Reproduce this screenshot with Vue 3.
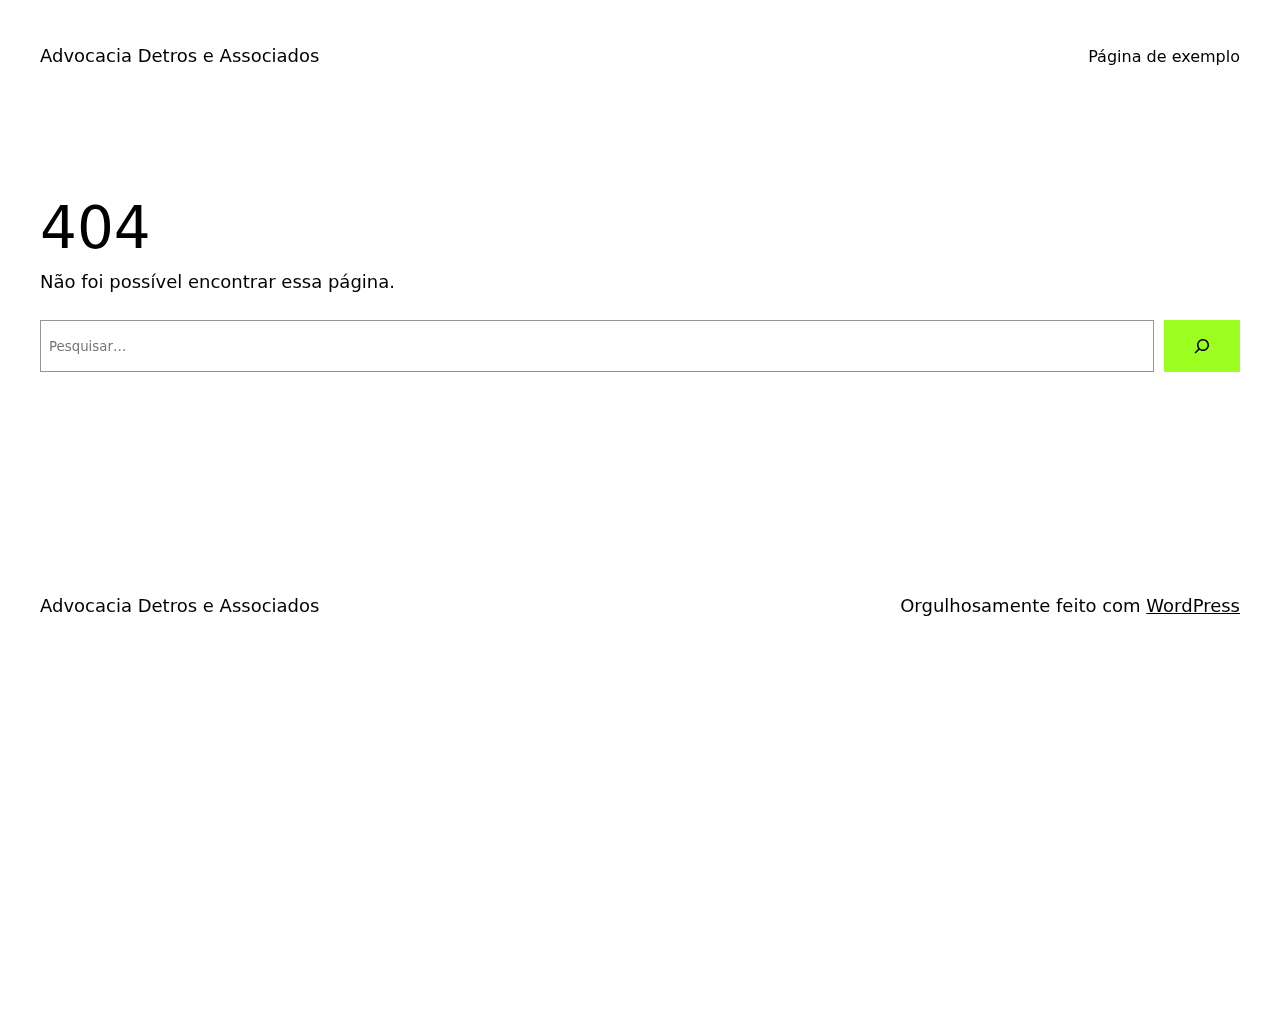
<script setup>
const title = 'Advocacia Detros e Associados'
</script>

<template>
  <div class="page">
    <header class="header">
      <span class="site">{{ title }}</span>
      <a class="nav" href="#">Página de exemplo</a>
    </header>
    <main class="main">
      <h1 class="code">404</h1>
      <p class="msg">Não foi possível encontrar essa página.</p>
      <form class="search" @submit.prevent>
        <input class="input" type="search" placeholder="Pesquisar…" aria-label="Pesquisar" />
        <button class="btn" type="submit" aria-label="Pesquisar">
          <svg width="24" height="24" viewBox="0 0 24 24" fill="currentColor">
            <path d="M13 5c-3.3 0-6 2.7-6 6 0 1.4.5 2.7 1.3 3.7l-3.8 3.8 1.1 1.1 3.8-3.8c1 .8 2.3 1.3 3.7 1.3 3.3 0 6-2.7 6-6S16.3 5 13 5zm0 10.5c-2.5 0-4.5-2-4.5-4.5s2-4.5 4.5-4.5 4.5 2 4.5 4.5-2 4.5-4.5 4.5z" />
          </svg>
        </button>
      </form>
    </main>
    <footer class="footer">
      <span class="site">{{ title }}</span>
      <span class="credit">Orgulhosamente feito com <a href="#">WordPress</a></span>
    </footer>
  </div>
</template>

<style scoped>
.page {
  font-family: "DejaVu Sans", sans-serif;
  will-change: transform;
  color: #000;
  font-size: 18px;
  min-height: 1024px;
  padding: 0 40px;
  box-sizing: border-box;
}
.header {
  display: flex;
  justify-content: space-between;
  align-items: center;
  padding-top: 40px;
  height: 31px;
  box-sizing: content-box;
  line-height: 31px;
}
.nav {
  color: #000;
  text-decoration: none;
  font-size: 16px;
  padding-top: 2px;
}
.main {
  padding-top: 119px;
}
.code {
  margin: 0;
  font-weight: 400;
  font-size: 58px;
  line-height: 76px;
  margin-bottom: -4px;
}
.msg {
  margin: 0;
  padding-top: 5px;
  line-height: 29px;
}
.search {
  display: flex;
  gap: 10px;
  margin-top: 24px;
  height: 52px;
}
.input {
  flex: 1;
  min-width: 0;
  box-sizing: border-box;
  border: 1px solid #949494;
  padding: 8px;
  font-family: inherit;
  font-size: 13.33px;
  border-radius: 0;
  outline: none;
  appearance: none;
}
.btn {
  width: 76px;
  border: 0;
  padding: 0;
  background: #9dff20;
  color: #000;
  display: flex;
  align-items: center;
  justify-content: center;
}
.footer {
  display: flex;
  justify-content: space-between;
  align-items: center;
  margin-top: 218px;
  line-height: 31px;
}
.credit a {
  color: #000;
  text-decoration: underline;
}
</style>
